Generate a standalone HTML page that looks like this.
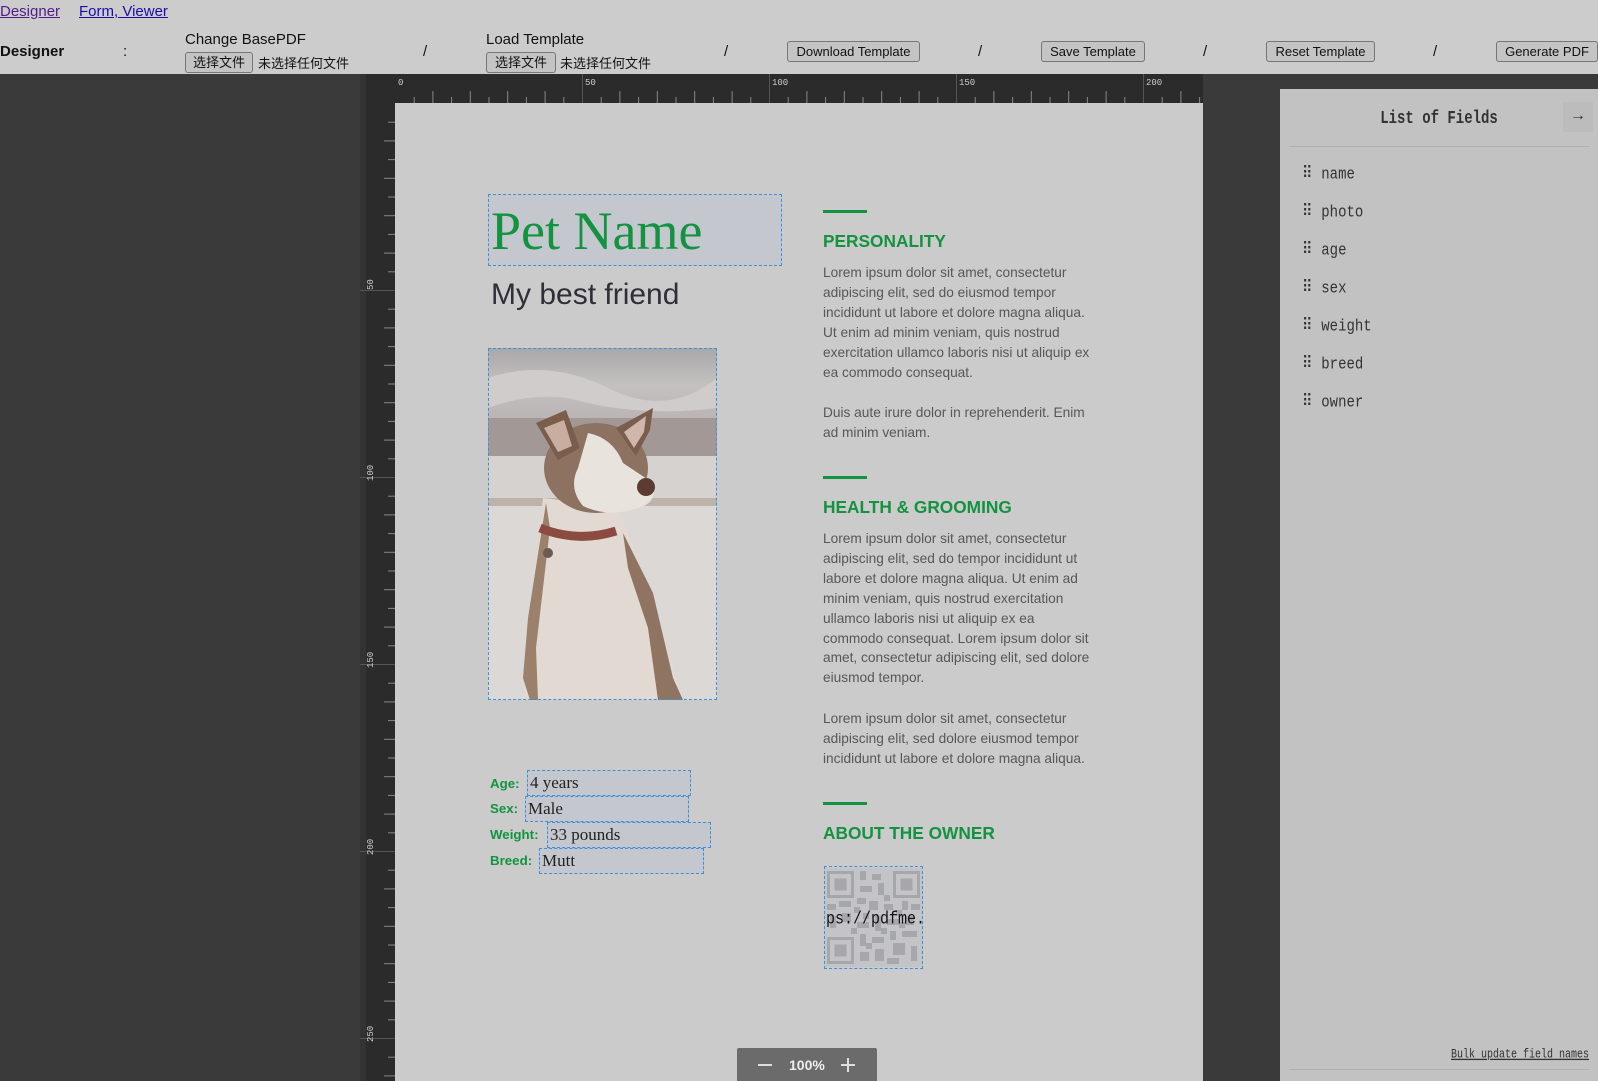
<!DOCTYPE html>
<html><head><meta charset="utf-8"><style>
*{margin:0;padding:0;box-sizing:border-box}
body{width:1598px;height:1081px;overflow:hidden;background:#3a3a3a;font-family:"Liberation Sans","Noto Sans CJK SC",sans-serif;position:relative}
.abs{position:absolute;white-space:nowrap}
#top{position:absolute;left:0;top:0;width:1598px;height:74px;background:#cccccc}
a{color:#1a0dab;text-decoration:underline}
.btn{position:absolute;height:21px;border:1px solid #767676;border-radius:3px;background:#c4c4c4;font-size:13px;color:#111;line-height:19px;text-align:center;white-space:nowrap}
.t15{font-size:15px;color:#111}
.page{position:absolute;left:395px;top:103px;width:808px;height:978px;background:#cbcbcb}
.box{position:absolute;border:1px dashed #3d8fe0;background:rgba(190,195,210,.45)}
.green{color:#13933f}
.para{position:absolute;left:428px;font-size:13.7px;line-height:19.9px;color:#575757;white-space:nowrap}
.hl{position:absolute;left:428px;width:44px;height:3px;background:#13933f}
.h{position:absolute;left:428px;font-size:17.3px;font-weight:bold;color:#13933f;white-space:nowrap}
.lab{position:absolute;left:95px;font-size:13.3px;font-weight:bold;color:#13933f}
.val{font-family:"Liberation Serif",serif;font-size:17px;color:#222;line-height:24px;padding-left:2px}
.panel{position:absolute;left:1280px;top:89px;width:318px;height:992px;background:#c2c2c2}
.item{position:absolute;left:22px;font-family:"Liberation Mono",monospace;font-size:14px;color:#333;transform:scaleY(1.2);transform-origin:left center}
.item b{font-weight:normal;color:#333;margin-right:10px;letter-spacing:-1px}
</style></head><body>
<div id="top">
 <a class="abs" style="left:0;top:3px;font-size:15px;color:#551a8b">Designer</a>
 <a class="abs" style="left:79px;top:3px;font-size:15px">Form, Viewer</a>
 <div class="abs t15" style="left:0;top:43px;font-weight:bold">Designer</div>
 <div class="abs t15" style="left:123px;top:43px">:</div>
 <div class="abs t15" style="left:185px;top:31px">Change BasePDF</div>
 <div class="btn" style="left:185px;top:52px;width:68px;font-size:13px">选择文件</div>
 <div class="abs" style="left:258px;top:53px;font-size:13px;color:#111">未选择任何文件</div>
 <div class="abs t15" style="left:423px;top:43px">/</div>
 <div class="abs t15" style="left:486px;top:31px">Load Template</div>
 <div class="btn" style="left:486px;top:52px;width:70px">选择文件</div>
 <div class="abs" style="left:560px;top:53px;font-size:13px;color:#111">未选择任何文件</div>
 <div class="abs t15" style="left:724px;top:43px">/</div>
 <div class="btn" style="left:787px;top:41px;width:133px">Download Template</div>
 <div class="abs t15" style="left:978px;top:43px">/</div>
 <div class="btn" style="left:1041px;top:41px;width:104px">Save Template</div>
 <div class="abs t15" style="left:1203px;top:43px">/</div>
 <div class="btn" style="left:1266px;top:41px;width:109px">Reset Template</div>
 <div class="abs t15" style="left:1433px;top:43px">/</div>
 <div class="btn" style="left:1496px;top:41px;width:102px">Generate PDF</div>
</div>

<svg class="abs" style="left:360px;top:74px" width="843" height="1007">
 <rect x="0" y="0" width="843" height="1007" fill="#2b2b2b"/>
 <rect x="0" y="0" width="6" height="1007" fill="#333"/>
 <g stroke="#777" stroke-width="1">
  <line x1="35" y1="29.5" x2="843" y2="29.5" stroke="#555"/>
  <line x1="35.5" y1="29" x2="35.5" y2="1007" stroke="#555"/>
 </g>
 <g id="ht" stroke="#888" stroke-width="1"></g>
 <g id="vt" stroke="#888" stroke-width="1"></g>
 <g font-family="Liberation Mono,monospace" font-size="9" fill="#ccc">
  <text x="38" y="11">0</text><text x="225" y="11">50</text><text x="412" y="11">100</text><text x="599" y="11">150</text><text x="786" y="11">200</text>
  <text transform="translate(13,216) rotate(-90)">50</text>
  <text transform="translate(13,407) rotate(-90)">100</text>
  <text transform="translate(13,594) rotate(-90)">150</text>
  <text transform="translate(13,781) rotate(-90)">200</text>
  <text transform="translate(13,968) rotate(-90)">250</text>
 </g>
</svg>
<script>
(function(){var s=3.74,h=document.getElementById('ht'),v=document.getElementById('vt'),o='';
for(var i=1;i<=43;i++){var x=35+i*s*5+.5;var big=i%10==0,mid=i%2==0;var y1=big?0:(mid?17:23);o+='<line x1="'+x+'" y1="'+y1+'" x2="'+x+'" y2="29"'+(big?' stroke="#555"':'')+'/>';}
h.innerHTML=o;o='';
for(var j=1;j<=52;j++){var y=29+j*s*5+.5;var big=j%10==0,mid=j%2==0;var x1=big?0:(mid?24:28);o+='<line x1="'+x1+'" y1="'+y+'" x2="35" y2="'+y+'"'+(big?' stroke="#555"':'')+'/>';}
v.innerHTML=o;})();
</script>

<div class="page">
 <div class="box" style="left:93px;top:91px;width:294px;height:72px"></div>
 <div class="abs green" style="left:96px;top:97px;font-family:'Liberation Serif',serif;font-size:54px;line-height:62px">Pet Name</div>
 <div class="abs" style="left:96px;top:175px;font-size:30px;color:#2f2f36">My best friend</div>
 <svg class="abs" style="left:93px;top:245px" width="229" height="352" viewBox="0 0 229 352">
  <defs><linearGradient id="sky" x1="0" y1="0" x2="0" y2="1"><stop offset="0" stop-color="#a9a7a8"/><stop offset=".5" stop-color="#c4c1c1"/><stop offset="1" stop-color="#b9b3b2"/></linearGradient></defs>
  <rect width="229" height="352" fill="#dcd8d6"/>
  <rect width="229" height="75" fill="url(#sky)"/>
  <path d="M0 30 Q60 10 120 40 T229 30 L229 60 Q150 70 80 50 Q40 45 0 60Z" fill="#cfcccb"/>
  <rect y="70" width="229" height="40" fill="#a29895"/>
  <rect y="108" width="229" height="45" fill="#d6d2d0"/>
  <rect y="150" width="229" height="8" fill="#bdb3ab"/>
  <path d="M55 150 L45 240 L35 352 L195 352 L180 300 L165 250 L140 185 L130 160Z" fill="#e1d9d2"/>
  <path d="M135 185 L165 245 L185 330 L195 352 L170 352 L160 280 L140 220Z" fill="#8f7462"/>
  <path d="M58 155 L40 270 L35 330 L42 352 L50 352 L48 300 L55 240 L62 180Z" fill="#9b806c"/>
  <ellipse cx="108" cy="120" rx="52" ry="45" fill="#8d7262"/>
  <path d="M48 75 L78 62 L92 100 L70 112Z" fill="#7a5d4c"/>
  <path d="M56 80 L76 72 L84 98 L70 104Z" fill="#c9aea0"/>
  <path d="M128 80 L165 60 L162 82 L148 108Z" fill="#7a5d4c"/>
  <path d="M136 84 L158 68 L156 84 L146 100Z" fill="#cfb7ab"/>
  <path d="M100 85 Q125 90 135 115 L165 135 Q170 155 150 160 Q120 170 95 158 Q80 140 90 120Z" fill="#e9e3dd"/>
  <circle cx="158" cy="139" r="9" fill="#5c3b33"/>
  <path d="M52 180 Q90 195 128 183" stroke="#8b4b40" stroke-width="9" fill="none"/>
  <circle cx="60" cy="205" r="5" fill="#6c5a50"/>
 </svg>
 <div class="box" style="left:93px;top:245px;width:229px;height:352px;background:none"></div>

 <div class="hl" style="top:107px"></div>
 <div class="h" style="top:128px">PERSONALITY</div>
 <div class="para" style="top:160px">Lorem ipsum dolor sit amet, consectetur<br>adipiscing elit, sed do eiusmod tempor<br>incididunt ut labore et dolore magna aliqua.<br>Ut enim ad minim veniam, quis nostrud<br>exercitation ullamco laboris nisi ut aliquip ex<br>ea commodo consequat.</div>
 <div class="para" style="top:300px">Duis aute irure dolor in reprehenderit. Enim<br>ad minim veniam.</div>
 <div class="hl" style="top:373px"></div>
 <div class="h" style="top:394px">HEALTH &amp; GROOMING</div>
 <div class="para" style="top:426px">Lorem ipsum dolor sit amet, consectetur<br>adipiscing elit, sed do tempor incididunt ut<br>labore et dolore magna aliqua. Ut enim ad<br>minim veniam, quis nostrud exercitation<br>ullamco laboris nisi ut aliquip ex ea<br>commodo consequat. Lorem ipsum dolor sit<br>amet, consectetur adipiscing elit, sed dolore<br>eiusmod tempor.</div>
 <div class="para" style="top:606px">Lorem ipsum dolor sit amet, consectetur<br>adipiscing elit, sed dolore eiusmod tempor<br>incididunt ut labore et dolore magna aliqua.</div>
 <div class="hl" style="top:699px"></div>
 <div class="h" style="top:720px">ABOUT THE OWNER</div>

 <svg class="abs" style="left:429px;top:763px" width="99" height="103" viewBox="0 0 33 33">
  <rect width="33" height="33" fill="#c3c3c8"/>
  <g fill="#a6a6ad"><path d="M1 1h9v9H1zM23 1h9v9h-9zM1 23h9v9H1z"/></g>
  <g fill="#c3c3c8"><path d="M2 2h7v7H2zM24 2h7v7h-7zM2 24h7v7H2z"/></g>
  <g fill="#a6a6ad"><path d="M3.5 3.5h4v4h-4zM25.5 3.5h4v4h-4zM3.5 25.5h4v4h-4z"/>
  <path d="M12 1h2v3h-2zM16 2h3v2h-3zM12 6h4v2h-4zM18 5h2v4h-2zM11 10h3v2h-3zM15 11h3v3h-3zM1 12h3v2H1zM5 11h4v2H5zM20 12h3v2h-3zM26 11h2v3h-2zM29 12h3v2h-3zM2 16h2v4H2zM6 15h3v3H6zM11 18h4v2h-4zM17 16h2v5h-2zM21 17h4v2h-4zM27 16h3v3h-3zM12 22h2v4h-2zM16 23h4v2h-4zM22 21h2v3h-2zM26 21h5v2h-5zM23 25h4v4h-4zM29 26h2v5h-2zM12 28h3v3h-3zM17 27h3v4h-3zM21 30h4v2h-4zM10 13h2v2h-2zM13 15h2v2h-2zM20 9h2v2h-2zM24 14h2v2h-2zM9 20h2v2H9zM19 20h2v2h-2zM25 18h2v2h-2zM14 25h2v2h-2z"/></g>
 </svg>
 <div class="abs" style="left:429px;top:808px;width:99px;overflow:hidden;font-family:'Liberation Mono',monospace;font-size:15px;color:#111;transform:scaleY(1.15)"><span style="margin-left:-7px">tps://pdfme.com</span></div>
 <div class="box" style="left:429px;top:763px;width:99px;height:103px;background:none"></div>

 <div class="lab" style="top:673px">Age:</div>
 <div class="box val" style="left:132px;top:667px;width:164px;height:26px">4 years</div>
 <div class="lab" style="top:698px">Sex:</div>
 <div class="box val" style="left:130px;top:693px;width:164px;height:26px">Male</div>
 <div class="lab" style="top:724px">Weight:</div>
 <div class="box val" style="left:152px;top:719px;width:164px;height:26px">33 pounds</div>
 <div class="lab" style="top:750px">Breed:</div>
 <div class="box val" style="left:144px;top:745px;width:165px;height:26px">Mutt</div>
</div>

<div class="abs" style="left:737px;top:1048px;width:140px;height:33px;background:#6b6b6b;border-radius:2px 2px 0 0">
 <div class="abs" style="left:21px;top:16px;width:14px;height:1.5px;background:#ddd"></div>
 <div class="abs" style="left:52px;top:9px;font-size:14px;font-weight:bold;color:#eee">100%</div>
 <div class="abs" style="left:104px;top:16px;width:14px;height:1.5px;background:#ddd"></div>
 <div class="abs" style="left:110px;top:10px;width:1.5px;height:14px;background:#ddd"></div>
</div>

<div class="panel">
 <div class="abs" style="left:0;top:22px;width:318px;text-align:center;font-family:'Liberation Mono',monospace;font-size:14px;font-weight:bold;color:#333;transform:scaleY(1.3)">List of Fields</div>
 <div class="abs" style="left:283px;top:13px;width:30px;height:30px;background:#bcbcbc;text-align:center;line-height:28px;font-size:16px;color:#333">→</div>
 <div class="abs" style="left:9px;top:57px;width:300px;height:1px;background:#b0b0b0"></div>
 <div class="item" style="top:77px"><b>⠿</b>name</div>
 <div class="item" style="top:115px"><b>⠿</b>photo</div>
 <div class="item" style="top:153px"><b>⠿</b>age</div>
 <div class="item" style="top:191px"><b>⠿</b>sex</div>
 <div class="item" style="top:229px"><b>⠿</b>weight</div>
 <div class="item" style="top:267px"><b>⠿</b>breed</div>
 <div class="item" style="top:305px"><b>⠿</b>owner</div>
 <div class="abs" style="left:171px;top:961px;font-family:'Liberation Mono',monospace;font-size:10px;color:#333;text-decoration:underline;transform:scaleY(1.3)">Bulk update field names</div>
 <div class="abs" style="left:9px;top:980px;width:300px;height:1px;background:#b0b0b0"></div>
</div>
</body></html>
